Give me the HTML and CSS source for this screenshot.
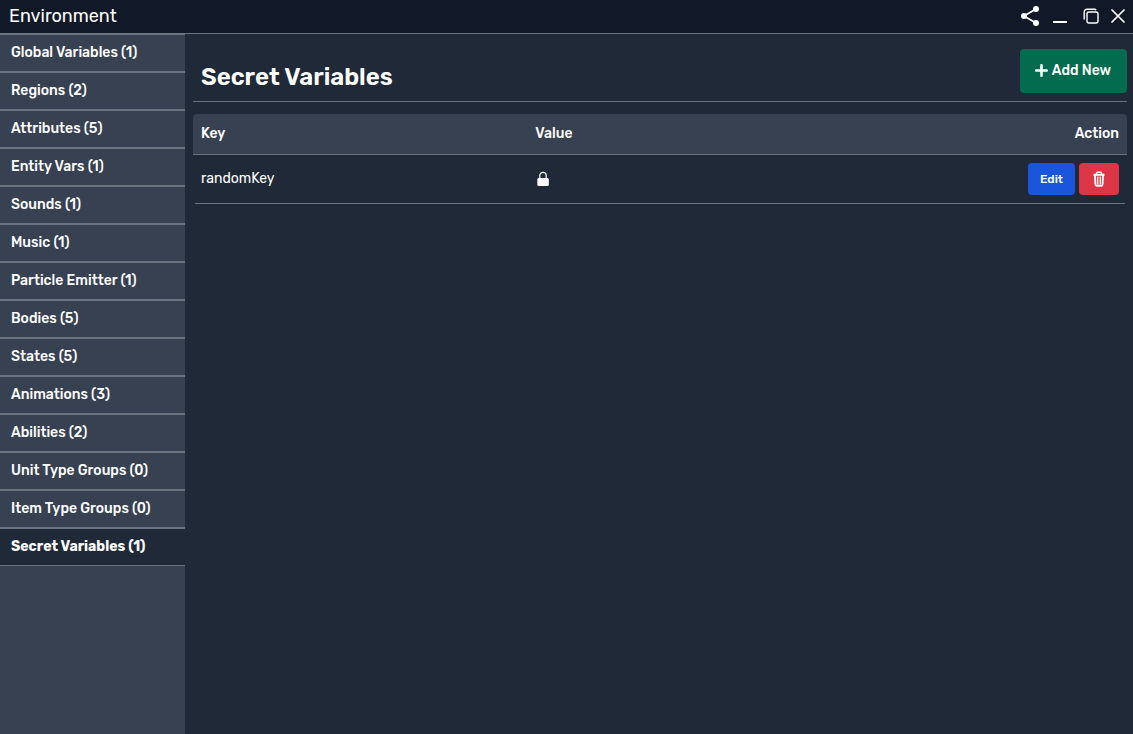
FILE: index.html
```html
<!DOCTYPE html>
<html lang="en">
<head>
<meta charset="utf-8">
<title>Environment</title>
<link rel="stylesheet" href="styles.css">
</head>
<body>
<div class="window">
  <header class="titlebar">
    <span class="titlebar-name">Environment</span>
    <div class="window-controls">
      <button class="control" aria-label="Share"><svg width="20" height="20" viewBox="0 0 20 20"><path d="M16 3 4 10l12 7" fill="none" stroke="currentColor" stroke-width="1.800"/><g fill="currentColor"><circle cx="16" cy="3" r="3"/><circle cx="4" cy="10" r="3"/><circle cx="16" cy="17" r="3"/></g></svg></button>
      <button class="control" aria-label="Minimize"><svg width="16" height="20" viewBox="0 0 16 20"><path d="M1 15h14v2H1z" fill="currentColor"/></svg></button>
      <button class="control" aria-label="Restore"><svg width="16" height="16" viewBox="0 0 16 16" fill="none" stroke="currentColor" stroke-width="1.400"><rect x="4" y="4" width="11" height="11" rx="2"/><path d="M1.200 11.500V4a2.800 2.800 0 0 1 2.800-2.800h7.500q1.200 0 1.500 1"/></svg></button>
      <button class="control" aria-label="Close"><svg width="14" height="14" viewBox="0 0 14 14"><path d="m1 1 12 12M13 1 1 13" fill="none" stroke="currentColor" stroke-width="1.700" stroke-linecap="round"/></svg></button>
    </div>
  </header>
  <div class="body">
    <nav class="sidebar">
      <button class="tab">Global Variables (1)</button>
      <button class="tab">Regions (2)</button>
      <button class="tab">Attributes (5)</button>
      <button class="tab">Entity Vars (1)</button>
      <button class="tab">Sounds (1)</button>
      <button class="tab">Music (1)</button>
      <button class="tab">Particle Emitter (1)</button>
      <button class="tab">Bodies (5)</button>
      <button class="tab">States (5)</button>
      <button class="tab">Animations (3)</button>
      <button class="tab">Abilities (2)</button>
      <button class="tab">Unit Type Groups (0)</button>
      <button class="tab">Item Type Groups (0)</button>
      <button class="tab tab-active" aria-current="page">Secret Variables (1)</button>
    </nav>
    <main class="content">
      <div class="content-head">
        <h1 class="heading">Secret Variables</h1>
        <button class="button button-add"><svg width="13" height="14" viewBox="0 0 13 14"><path d="M6.500 1.200v10.600M1.200 6.500h10.600" stroke="currentColor" stroke-width="2.600" stroke-linecap="round"/></svg>Add New</button>
      </div>
      <table class="variables">
        <thead>
          <tr><th class="col-key">Key</th><th>Value</th><th class="col-action">Action</th></tr>
        </thead>
        <tbody>
          <tr>
            <td>randomKey</td>
            <td><svg role="img" aria-label="Hidden" width="16" height="16" viewBox="0 0 16 16"><rect x="2.300" y="7" width="11.500" height="8" rx="1.500" fill="currentColor"/><path d="M4.800 8V4.500a3.200 3.200 0 0 1 6.400 0V8" fill="none" stroke="currentColor" stroke-width="1.200"/></svg></td>
            <td class="col-action"><div class="actions">
              <button class="button button-edit">Edit</button>
              <button class="button button-delete" aria-label="Delete"><svg width="12" height="16" viewBox="0 0 12 16" fill="none" stroke="currentColor"><path d="M.5 3.800h11" stroke-width="2"/><path d="M3.500 3.500V2Q3.500 1.200 4.500 1.200h3Q8.500 1.200 8.500 2v1.500" stroke-width="1.500"/><path d="M2 4l.4 9.300q.1 1.400 1.300 1.400h4.600q1.200 0 1.300-1.400L10 4" stroke-width="1.900"/><path d="M4.700 5.500v8M7.300 5.500v8" stroke-width="1.300"/></svg></button>
            </div></td>
          </tr>
        </tbody>
      </table>
    </main>
  </div>
</div>
</body>
</html>
```
FILE: styles.css
```css
* { box-sizing: border-box; }

body {
  margin: 0;
  background: #1f2937;
  color: #fff;
  font: 14px/20px Rubik, Roboto, sans-serif;
}

button {
  padding: 0;
  border: 0;
  background: none;
  color: inherit;
  font: inherit;
  cursor: pointer;
}

svg { display: block; }

.window {
  display: flex;
  flex-direction: column;
  min-height: 100vh;
}

.titlebar {
  display: flex;
  align-items: center;
  justify-content: space-between;
  height: 34px;
  padding: 0 8px 1px 9px;
  border-bottom: 1px solid #6b7280;
  background: #111827;
}

.titlebar-name {
  font-size: 18px;
  line-height: 24px;
}

.window-controls {
  display: flex;
  align-items: center;
  gap: 12px;
}

.control:nth-child(3) { margin-left: 3px; }

.body {
  display: flex;
  flex: 1;
}

.sidebar {
  display: flex;
  flex: none;
  flex-direction: column;
  width: 185px;
  background: #374151;
}

.tab {
  height: 38px;
  padding: 0 11px;
  border: solid #6b7280;
  border-width: 1px 0;
  font-weight: 500;
  text-align: left;
}

.tab-active {
  background: #1f2937;
  font-weight: 700;
}

.content {
  flex: 1;
  min-width: 0;
  padding: 15px 6px 8px 8px;
}

.content-head {
  display: flex;
  align-items: center;
  justify-content: space-between;
  margin-bottom: 12px;
  padding: 0 0 8px 8px;
  border-bottom: 1px solid #6b7280;
}

.heading {
  margin: 12px 0 0;
  font-size: 24px;
  font-weight: 600;
  line-height: 32px;
}

.button {
  display: flex;
  align-items: center;
  justify-content: center;
  border-radius: 4px;
  font-weight: 500;
}

.button-add {
  gap: 4px;
  height: 44px;
  padding: 0 16px 0 15px;
  background: #046c4e;
}

.button-edit {
  height: 32px;
  padding: 0 12px;
  background: #1a56db;
  font-size: 12px;
}

.button-delete {
  width: 40px;
  height: 32px;
  background: #dc3545;
}

.variables {
  width: 100%;
  border-spacing: 0;
  table-layout: fixed;
}

.variables th,
.variables td {
  padding: 8px;
  text-align: left;
}

.variables th {
  height: 41px;
  border-bottom: 1px solid #6b7280;
  background: #374151;
  font-weight: 500;
}

.variables th:first-child { border-top-left-radius: 4px; }
.variables th:last-child { border-top-right-radius: 4px; }

.variables td { padding-bottom: 9px; }

/* Row divider, inset from both ends of the table */
.variables tbody tr {
  background: linear-gradient(#6b7280, #6b7280) center bottom / calc(100% - 4px) 1px no-repeat;
}

.variables .col-key { width: 35.8%; }
.variables .col-action { text-align: right; }

.actions {
  display: flex;
  justify-content: flex-end;
  gap: 4px;
}
```
